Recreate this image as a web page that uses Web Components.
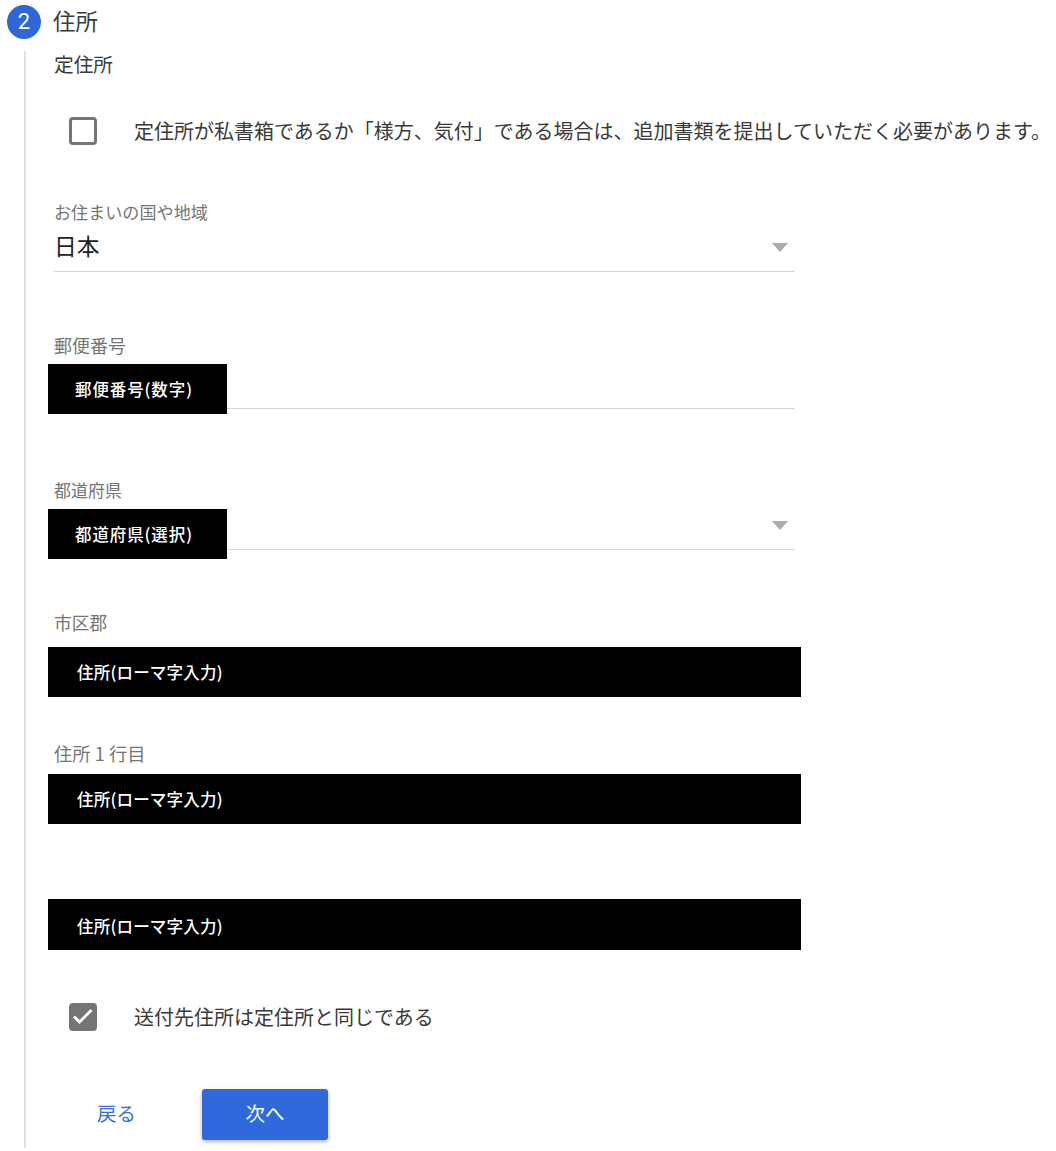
<!DOCTYPE html>
<html lang="ja">
<head>
<meta charset="utf-8">
<title>住所</title>
<style>
  html, body { margin: 0; background: #fff; }
  body { font-family: "Noto Sans CJK JP", "Noto Sans", sans-serif; color: #3a3a3a; }
</style>
</head>
<body>
<address-step number="2" heading="住所">
  <form-heading>定住所</form-heading>
  <form-check style="margin-top:38px">定住所が私書箱であるか「様方、気付」である場合は、追加書類を提出していただく必要があります。</form-check>
  <form-select style="margin-top:55px" label="お住まいの国や地域" value="日本"></form-select>
  <form-field style="margin-top:62px;font-size:18px" label="郵便番号" gap="6" line="45"><masked-text width="179" inset="27" style="letter-spacing:.9px">郵便番号(数字)</masked-text></form-field>
  <form-field style="margin-top:64px" label="都道府県" gap="7" line="41" arrow><masked-text width="179" inset="27" style="letter-spacing:.9px">都道府県(選択)</masked-text></form-field>
  <form-field style="margin-top:52px;font-size:17.7px" label="市区郡" gap="12"><masked-text width="753" inset="29" style="letter-spacing:.2px">住所(ローマ字入力)</masked-text></form-field>
  <form-field style="margin-top:45px;font-size:18.3px" label="住所 1 行目" gap="8"><masked-text width="753" inset="29" style="letter-spacing:.2px">住所(ローマ字入力)</masked-text></form-field>
  <form-field style="margin-top:75px"><masked-text width="753" inset="29" style="letter-spacing:.2px;height:51px;line-height:54px">住所(ローマ字入力)</masked-text></form-field>
  <form-check style="margin-top:53px" checked>送付先住所は定住所と同じである</form-check>
  <step-actions style="margin-top:58px">
    <step-button>戻る</step-button>
    <step-button primary>次へ</step-button>
  </step-actions>
</address-step>

<script>
const stepTemplate = document.createElement("template");
stepTemplate.innerHTML = `
<style>
:host { display: block; width: 1056px; overflow: hidden; }
.head { display: flex; align-items: center; gap: 12px; height: 34px; padding: 5px 0 0 7px; }
.num {
  width: 34px; height: 34px; border-radius: 50%;
  background: #2f66d8; color: #fff;
  font: 400 22px/34px Roboto, sans-serif; text-align: center;
}
.title { font-size: 22.5px; line-height: 31px; height: 34px; color: #3a3a3a; }
.body {
  margin: 12px 0 0 24px; padding: 0 0 8px 28px;
  border-left: 2px solid #e2e2e2;
  display: flex; flex-direction: column; align-items: flex-start;
}
</style>
<div class="head"><div class="num"></div><div class="title"></div></div>
<div class="body"><slot></slot></div>
`;

class AddressStep extends HTMLElement {
  connectedCallback() {
    this.attachShadow({ mode: "open" });
    this.shadowRoot.appendChild(stepTemplate.content.cloneNode(true));
    this.shadowRoot.querySelector(".num").textContent = this.getAttribute("number");
    this.shadowRoot.querySelector(".title").textContent = this.getAttribute("heading");
  }
}

const headingTemplate = document.createElement("template");
headingTemplate.innerHTML = `
<style>
:host { display: block; height: 28px; font-size: 19.7px; line-height: 26px; color: #3a3a3a; }
</style>
<slot></slot>
`;

class FormHeading extends HTMLElement {
  connectedCallback() {
    this.attachShadow({ mode: "open" });
    this.shadowRoot.appendChild(headingTemplate.content.cloneNode(true));
  }
}

const checkTemplate = document.createElement("template");
checkTemplate.innerHTML = `
<style>
:host { display: flex; align-items: center; height: 28px; margin-left: 15px; white-space: nowrap; }
.box {
  box-sizing: border-box; width: 28px; height: 28px; flex: none;
  border: 3px solid #757575; border-radius: 4px; background: #fff;
}
:host([checked]) .box { background: #757575; }
svg { display: none; width: 22px; height: 22px; }
:host([checked]) svg { display: block; }
.text { margin-left: 37px; font-size: 20px; line-height: 28px; height: 28px; color: #3a3a3a; }
</style>
<div class="box"><svg viewBox="0 0 22 22"><path d="M2 10.5l5.5 5.5L19.5 4" fill="none" stroke="#fff" stroke-width="2.8"/></svg></div>
<div class="text"><slot></slot></div>
`;

class FormCheck extends HTMLElement {
  connectedCallback() {
    this.attachShadow({ mode: "open" });
    this.shadowRoot.appendChild(checkTemplate.content.cloneNode(true));
  }
}

const selectTemplate = document.createElement("template");
selectTemplate.innerHTML = `
<style>
:host { display: block; width: 741px; }
.label { height: 24px; font-size: 17.1px; line-height: 24px; color: #757575; }
.control {
  box-sizing: border-box; height: 48px; border-bottom: 1px solid #d6d6d6;
  display: flex; justify-content: space-between;
}
.value { font-size: 22.8px; line-height: 43px; color: #222; }
.arrow {
  width: 0; height: 0; margin: 19px 7px 0 0;
  border-left: 8.5px solid transparent; border-right: 8.5px solid transparent;
  border-top: 9px solid #ababab;
}
</style>
<div class="label"></div>
<div class="control"><div class="value"></div><div class="arrow"></div></div>
`;

class FormSelect extends HTMLElement {
  connectedCallback() {
    this.attachShadow({ mode: "open" });
    this.shadowRoot.appendChild(selectTemplate.content.cloneNode(true));
    this.shadowRoot.querySelector(".label").textContent = this.getAttribute("label");
    this.shadowRoot.querySelector(".value").textContent = this.getAttribute("value");
  }
}

const fieldTemplate = document.createElement("template");
fieldTemplate.innerHTML = `
<style>
:host { display: block; width: 741px; font-size: 17px; }
.label { height: 24px; line-height: 23px; color: #757575; white-space: pre; }
.control { display: flex; align-items: flex-start; margin-left: -6px; }
.line {
  box-sizing: border-box; flex: 1; display: flex; justify-content: flex-end;
  border-bottom: 1px solid #d6d6d6;
}
.arrow {
  width: 0; height: 0; margin: 12px 7px 0 0;
  border-left: 8.5px solid transparent; border-right: 8.5px solid transparent;
  border-top: 9px solid #ababab;
}
</style>
<div class="label"></div>
<div class="control"><slot></slot><div class="line"><div class="arrow"></div></div></div>
`;

class FormField extends HTMLElement {
  connectedCallback() {
    this.attachShadow({ mode: "open" });
    this.shadowRoot.appendChild(fieldTemplate.content.cloneNode(true));
    const root = this.shadowRoot;
    const label = root.querySelector(".label");
    if (this.hasAttribute("label")) label.textContent = this.getAttribute("label");
    else label.remove();
    root.querySelector(".control").style.paddingTop = (this.getAttribute("gap") || 0) + "px";
    const line = root.querySelector(".line");
    if (this.hasAttribute("line")) line.style.height = this.getAttribute("line") + "px";
    else line.remove();
    if (!this.hasAttribute("arrow") && line.isConnected) root.querySelector(".arrow").remove();
  }
}

const maskTemplate = document.createElement("template");
maskTemplate.innerHTML = `
<style>
:host {
  display: block; flex: none; box-sizing: border-box; height: 50px;
  background: #000; color: #fff;
  font-size: 16.5px; font-weight: 500; line-height: 51px; white-space: nowrap;
}
</style>
<slot></slot>
`;

class MaskedText extends HTMLElement {
  connectedCallback() {
    this.attachShadow({ mode: "open" });
    this.shadowRoot.appendChild(maskTemplate.content.cloneNode(true));
    this.style.width = this.getAttribute("width") + "px";
    this.style.paddingLeft = this.getAttribute("inset") + "px";
  }
}

const actionsTemplate = document.createElement("template");
actionsTemplate.innerHTML = `
<style>
:host { display: flex; align-items: center; gap: 56px; margin-left: 33px; }
</style>
<slot></slot>
`;

class StepActions extends HTMLElement {
  connectedCallback() {
    this.attachShadow({ mode: "open" });
    this.shadowRoot.appendChild(actionsTemplate.content.cloneNode(true));
  }
}

const buttonTemplate = document.createElement("template");
buttonTemplate.innerHTML = `
<style>
:host {
  display: block; box-sizing: border-box; height: 51px; padding: 0 10px;
  border-radius: 3px; color: #3b72d9;
  font-size: 19.5px; line-height: 48px; text-align: center;
}
:host([primary]) {
  width: 126px; background: #2f69dc; color: #fff;
  box-shadow: 0 2px 4px rgba(0,0,0,.3);
}
</style>
<slot></slot>
`;

class StepButton extends HTMLElement {
  connectedCallback() {
    this.attachShadow({ mode: "open" });
    this.shadowRoot.appendChild(buttonTemplate.content.cloneNode(true));
  }
}

customElements.define("address-step", AddressStep);
customElements.define("form-heading", FormHeading);
customElements.define("form-check", FormCheck);
customElements.define("form-select", FormSelect);
customElements.define("form-field", FormField);
customElements.define("masked-text", MaskedText);
customElements.define("step-actions", StepActions);
customElements.define("step-button", StepButton);
</script>
</body>
</html>
